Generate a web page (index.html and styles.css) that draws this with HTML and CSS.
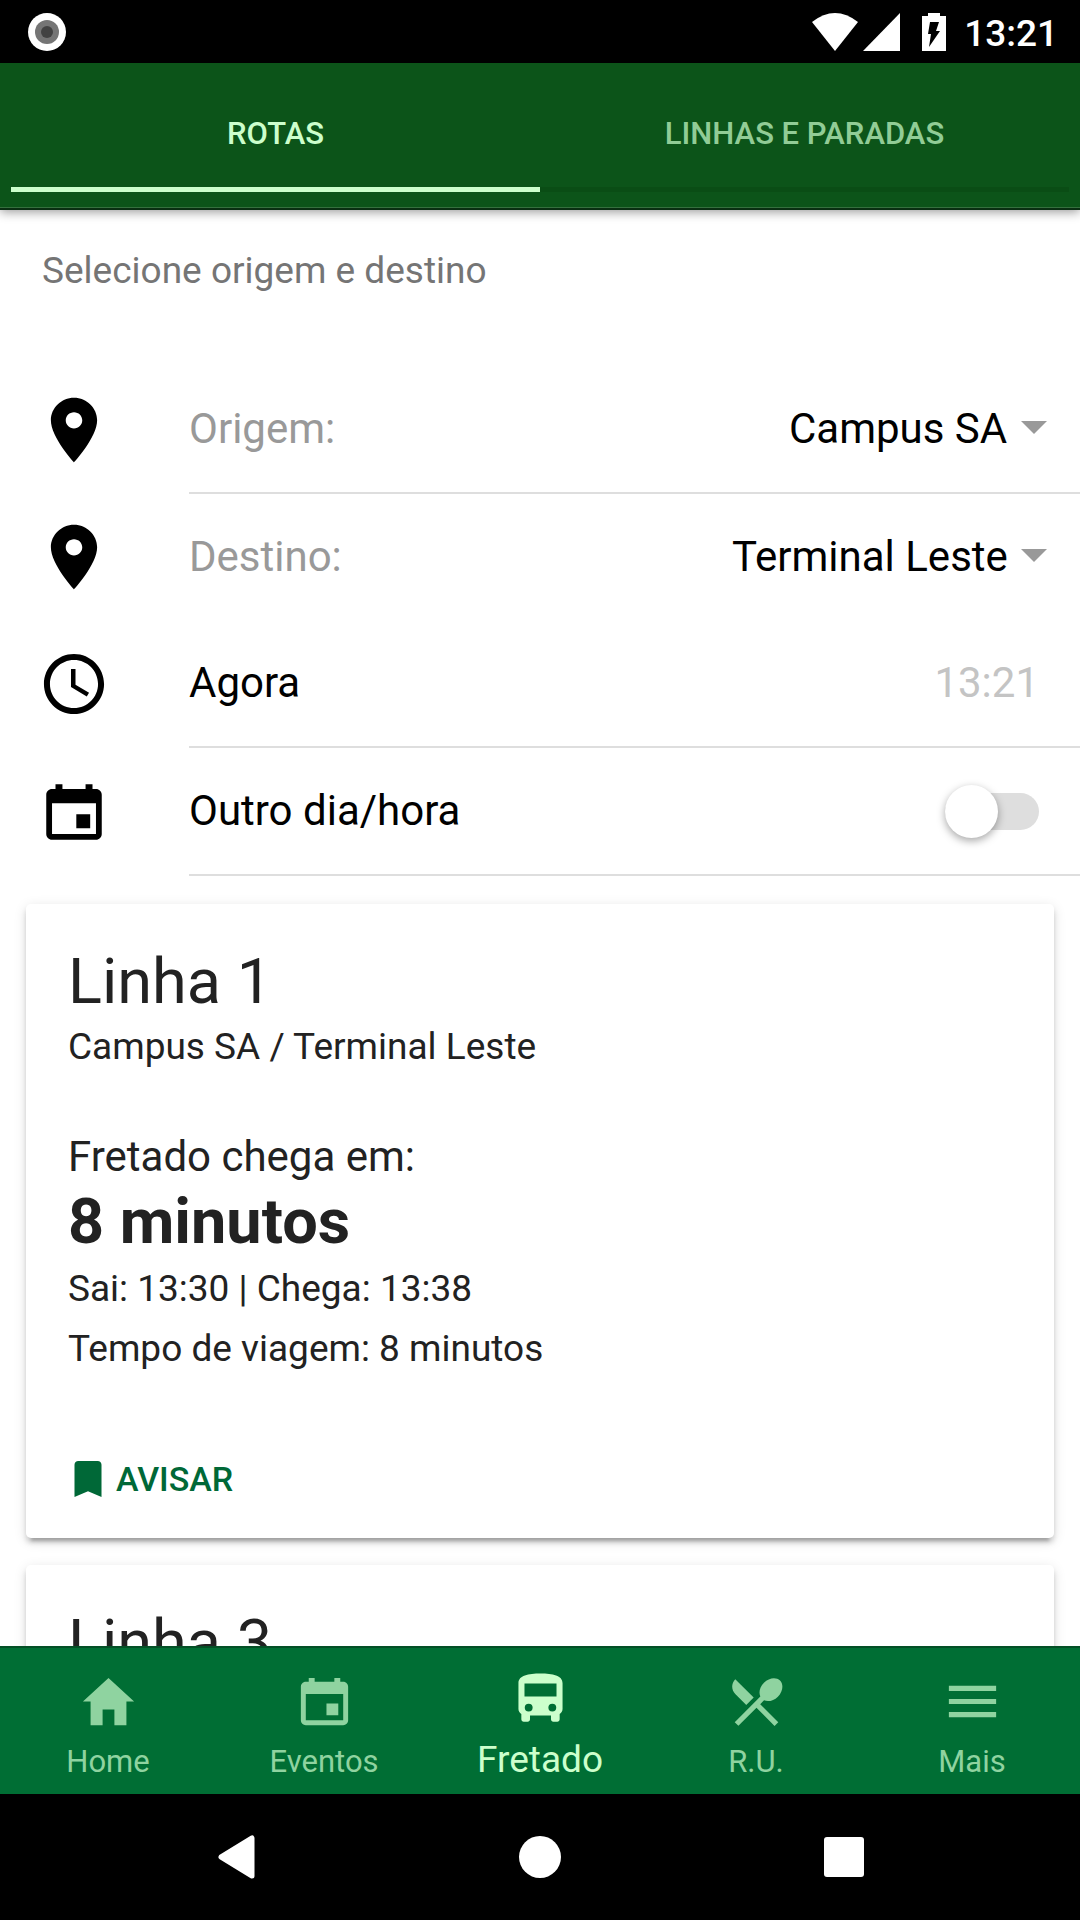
FILE: index.html
```html
<!DOCTYPE html>
<html lang="pt-BR">
<head>
  <meta charset="utf-8">
  <meta name="viewport" content="width=device-width, initial-scale=1">
  <title>Fretado</title>
  <link rel="stylesheet" href="styles.css">
</head>
<body>
  <svg class="sprite" aria-hidden="true">
    <symbol id="pin" viewBox="0 0 512 512"><path d="M256 32c-88 0-160 70.6-160 156.8C96 306.4 256 480 256 480s160-173.6 160-291.2C416 102.6 344 32 256 32zm0 212.8c-32 0-57.1-24.6-57.1-56 0-31.4 25.1-56 57.1-56s57.1 24.6 57.1 56c0 31.4-25.1 56-57.1 56z"/></symbol>
    <symbol id="clock" viewBox="0 0 512 512"><path d="M255.8 48C141 48 48 141.2 48 256s93 208 207.8 208c115 0 208.2-93.2 208.2-208S370.8 48 255.8 48zm.2 374.4c-91.9 0-166.4-74.5-166.4-166.4S164.1 89.6 256 89.6 422.4 164.1 422.4 256 347.9 422.4 256 422.4z"/><path d="M266.4 152h-31.2v124.8l109.2 65.5 15.6-25.6-93.6-55.5z"/></symbol>
    <symbol id="calendar" viewBox="0 0 512 512"><path d="M368 272h-96v96h96v-96zM336 64v32H176V64h-48v32h-24c-22 0-40 18-40 40v272c0 22 18 40 40 40h304c22 0 40-18 40-40V136c0-22-18-40-40-40h-24V64h-48zm72 344H104V196h304v212z"/></symbol>
    <symbol id="bookmark" viewBox="0 0 512 512"><path d="M360 64H152c-22 0-40 18-40 40v344l144-62 144 62V104c0-22-18-40-40-40z"/></symbol>
    <symbol id="house" viewBox="0 0 512 512"><path d="M208 448V320h96v128h97.6V256H464L256 64 48 256h62.4v192z"/></symbol>
    <symbol id="bus" viewBox="0 0 24 24"><path d="M3.600 16.400c0 .8.4 1.400 1.100 1.900v2c0 .5.400.9.900.9h1.500c.5 0 .9-.4.9-.9v-1.400h8v1.400c0 .5.400.9.900.9h1.500c.5 0 .9-.4.9-.9v-2c.7-.5 1.100-1.100 1.100-1.900V6.600c0-3-3.800-3.700-8.400-3.700s-8.400.7-8.400 3.700zm3.900.95a1.500 1.500 0 1 1 0-3 1.500 1.500 0 0 1 0 3zm9 0a1.500 1.500 0 1 1 0-3 1.500 1.500 0 0 1 0 3zM18.100 11.650H5.900V6.700h12.200z"/></symbol>
    <symbol id="restaurant" viewBox="0 0 24 24"><path d="M8.1 13.34l2.83-2.83L3.91 3.5c-1.56 1.56-1.56 4.09 0 5.66l4.19 4.18zm6.78-1.81c1.53.71 3.68.21 5.27-1.38 1.91-1.91 2.28-4.65.81-6.12-1.46-1.46-4.2-1.1-6.12.81-1.59 1.59-2.09 3.74-1.38 5.27L3.7 19.87l1.41 1.41L12 14.41l6.88 6.88 1.41-1.41L13.41 13z"/></symbol>
    <symbol id="menu" viewBox="0 0 512 512"><path d="M64 384h384v-43H64zM64 277h384v-42H64zM64 128v43h384v-43z"/></symbol>
  </svg>

  <header class="status">
    <svg class="status-app" viewBox="0 0 38 38" aria-hidden="true"><circle cx="19" cy="19" r="19" fill="#fff"/><circle cx="19" cy="19" r="12" fill="#757575"/><circle cx="19" cy="19" r="6" fill="#424242"/></svg>
    <div class="status-right">
      <svg width="88" height="38" viewBox="0 0 88 38" fill="#fff" aria-hidden="true"><path d="M0 9Q23-9 46 9L23 38z"/><path d="M88 0v38H51z"/></svg>
      <svg class="battery" width="24" height="38" viewBox="0 0 24 38" aria-hidden="true"><path fill="#fff" d="M6 0h12v3h6v35H0V3h6z"/><path fill="#000" d="M8 9h9l-3 9h4L7 34l2-13H6z"/></svg>
      <time>13:21</time>
    </div>
  </header>

  <nav class="segments">
    <button class="segment segment-active" type="button">ROTAS</button>
    <button class="segment" type="button">LINHAS E PARADAS</button>
  </nav>

  <main class="content">
    <h1 class="list-header">Selecione origem e destino</h1>
    <div class="list">
      <div class="item">
        <svg class="item-icon"><use href="#pin"/></svg>
        <div class="item-inner item-line">
          <label class="muted" for="origem">Origem:</label>
          <select id="origem" class="picker"><option>Campus SA</option></select>
        </div>
      </div>
      <div class="item item-plain">
        <svg class="item-icon"><use href="#pin"/></svg>
        <div class="item-inner">
          <label class="muted" for="destino">Destino:</label>
          <select id="destino" class="picker"><option>Terminal Leste</option></select>
        </div>
      </div>
      <div class="item">
        <svg class="item-icon"><use href="#clock"/></svg>
        <div class="item-inner item-line">
          <span>Agora</span>
          <time class="now">13:21</time>
        </div>
      </div>
      <div class="item">
        <svg class="item-icon"><use href="#calendar"/></svg>
        <div class="item-inner item-line">
          <label for="outro">Outro dia/hora</label>
          <input id="outro" class="toggle" type="checkbox" role="switch">
        </div>
      </div>
    </div>

    <div class="cards">
      <article class="card">
        <h2 class="title">Linha 1</h2>
        <p class="route">Campus SA / Terminal Leste</p>
        <p class="lead">Fretado chega em:</p>
        <p class="title wait">8 minutos</p>
        <p class="detail">Sai: 13:30 | Chega: 13:38</p>
        <p class="detail">Tempo de viagem: 8 minutos</p>
        <button class="notify" type="button"><svg class="notify-icon"><use href="#bookmark"/></svg>AVISAR</button>
      </article>
      <article class="card">
        <h2 class="title">Linha 3</h2>
      </article>
    </div>
  </main>

  <nav class="tabs">
    <a class="tab" href="#home"><svg class="tab-icon"><use href="#house"/></svg>Home</a>
    <a class="tab" href="#eventos"><svg class="tab-icon"><use href="#calendar"/></svg>Eventos</a>
    <a class="tab tab-active" href="#fretado"><svg class="tab-icon"><use href="#bus"/></svg>Fretado</a>
    <a class="tab" href="#ru"><svg class="tab-icon"><use href="#restaurant"/></svg>R.U.</a>
    <a class="tab" href="#mais"><svg class="tab-icon"><use href="#menu"/></svg>Mais</a>
  </nav>

  <footer class="system">
    <button class="system-key" type="button" aria-label="Voltar"><svg width="42" height="44" viewBox="0 0 42 44"><path d="M37 3v38L6 22z" fill="#fff" stroke="#fff" stroke-width="5" stroke-linejoin="round"/></svg></button>
    <button class="system-key" type="button" aria-label="Início"><svg width="42" height="44" viewBox="0 0 42 44"><circle cx="21" cy="22" r="21" fill="#fff"/></svg></button>
    <button class="system-key" type="button" aria-label="Recentes"><svg width="42" height="44" viewBox="0 0 42 44"><rect x="1" y="2" width="40" height="40" rx="3" fill="#fff"/></svg></button>
  </footer>
</body>
</html>
```
FILE: styles.css
```css
* {
  box-sizing: border-box;
}

body {
  display: flex;
  flex-direction: column;
  height: 100vh;
  margin: 0;
  background: #fff;
  color: #000;
  font-family: Roboto, "Noto Sans", sans-serif;
  font-size: 42px;
  line-height: 56px;
}

h1,
h2,
p {
  margin: 0;
  font-weight: 400;
}

button,
select {
  border: 0;
  background: none;
  font: inherit;
  color: inherit;
}

svg {
  display: block;
  fill: currentColor;
}

.sprite {
  position: absolute;
  width: 0;
  height: 0;
}

/* Status bar */
.status {
  display: flex;
  flex: none;
  align-items: center;
  justify-content: space-between;
  height: 63px;
  padding: 0 22px 0 28px;
  background: #000;
  color: #fff;
}

.status-app {
  width: 38px;
  height: 38px;
}

.status-right {
  display: flex;
  align-items: center;
  font-size: 37px;
  font-weight: 500;
  line-height: 40px;
}

.battery {
  margin: 0 18px 0 22px;
}

.status-right time {
  padding-top: 4px;
}

/* Top segments */
.segments {
  position: relative;
  display: flex;
  flex: none;
  padding: 18px 11px 16px;
  background: #0c5419;
  border-bottom: 2px solid #0a2f12;
  box-shadow: inset 0 -1px #35703e, 0 2px 10px rgba(0, 0, 0, 0.4);
}

.segment {
  flex: 1;
  height: 111px;
  padding: 0;
  border-bottom: 5px solid #0a4d15;
  color: #91cc96;
  font-size: 31px;
  font-weight: 500;
}

.segment-active {
  border-color: #ccffcc;
  color: #ccffcc;
}

/* Scrolling content */
.content {
  flex: 1;
  min-height: 0;
  overflow: hidden;
}

.list-header {
  height: 156px;
  padding: 33px 42px 0;
  color: #757575;
  font-size: 37px;
}

.item {
  display: flex;
  align-items: stretch;
  height: 128px;
  padding-left: 37px;
}

.item-plain {
  height: 126px;
}

.item-icon {
  flex: none;
  align-self: center;
  width: 74px;
  height: 74px;
}

.item-inner {
  display: flex;
  flex: 1;
  align-items: center;
  justify-content: space-between;
  margin-left: 78px;
  padding-right: 33px;
}

.item-line {
  border-bottom: 2px solid #dedede;
}

.muted {
  color: #999;
}

.picker {
  appearance: none;
  height: 56px;
  padding: 0 39px 0 0;
  background: url("data:image/svg+xml,%3Csvg xmlns='http://www.w3.org/2000/svg' viewBox='0 0 26 13'%3E%3Cpath d='M0 0h26L13 13z' fill='%23999'/%3E%3C/svg%3E") right 20px / 26px 13px no-repeat;
}

.now {
  padding-right: 8px;
  color: #c4c4c4;
}

.toggle {
  display: flex;
  appearance: none;
  align-items: center;
  width: 94px;
  height: 37px;
  margin: 0 8px 0 0;
  border-radius: 19px;
  background: #dedede;
}

.toggle::before {
  width: 53px;
  height: 53px;
  border-radius: 50%;
  background: #fff;
  box-shadow: 0 3px 8px rgba(0, 0, 0, 0.35);
  content: "";
}

.toggle:checked {
  justify-content: flex-end;
}

/* Route cards */
.cards {
  display: flex;
  flex-direction: column;
  gap: 27px;
  padding: 28px 26px;
}

.card {
  padding: 41px 42px 12px;
  border-radius: 5px;
  color: #222;
  box-shadow: 0 5px 5px rgba(0, 0, 0, 0.14), 0 8px 3px -5px rgba(0, 0, 0, 0.2), 0 3px 13px rgba(0, 0, 0, 0.12);
}

.title {
  font-size: 63px;
  line-height: 74px;
}

.route {
  font-size: 37px;
}

.lead {
  margin-top: 54px;
}

.wait {
  font-weight: 700;
}

.detail {
  font-size: 37px;
  line-height: 60px;
}

.notify {
  display: flex;
  align-items: center;
  gap: 4px;
  height: 94px;
  margin: 53px 0 0 -4px;
  padding: 0;
  color: #006837;
  font-size: 34px;
  font-weight: 500;
}

.notify-icon {
  width: 48px;
  height: 48px;
}

/* Bottom tabs */
.tabs {
  position: relative;
  display: flex;
  flex: none;
  height: 148px;
  background: #006e34;
  border-top: 2px solid #045026;
}

.tab {
  display: flex;
  flex: 1;
  flex-direction: column;
  align-items: center;
  justify-content: flex-end;
  gap: 11px;
  padding-bottom: 14px;
  color: #8fd3a0;
  font-size: 31px;
  line-height: 36px;
  text-decoration: none;
}

.tab-active {
  color: #ccffcc;
  font-size: 37px;
  line-height: 40px;
}

.tab-icon {
  width: 63px;
  height: 63px;
}

/* Android navigation */
.system {
  display: flex;
  flex: none;
  align-items: center;
  justify-content: center;
  gap: 262px;
  height: 126px;
  background: #000;
}

.system-key {
  padding: 0;
}
```
